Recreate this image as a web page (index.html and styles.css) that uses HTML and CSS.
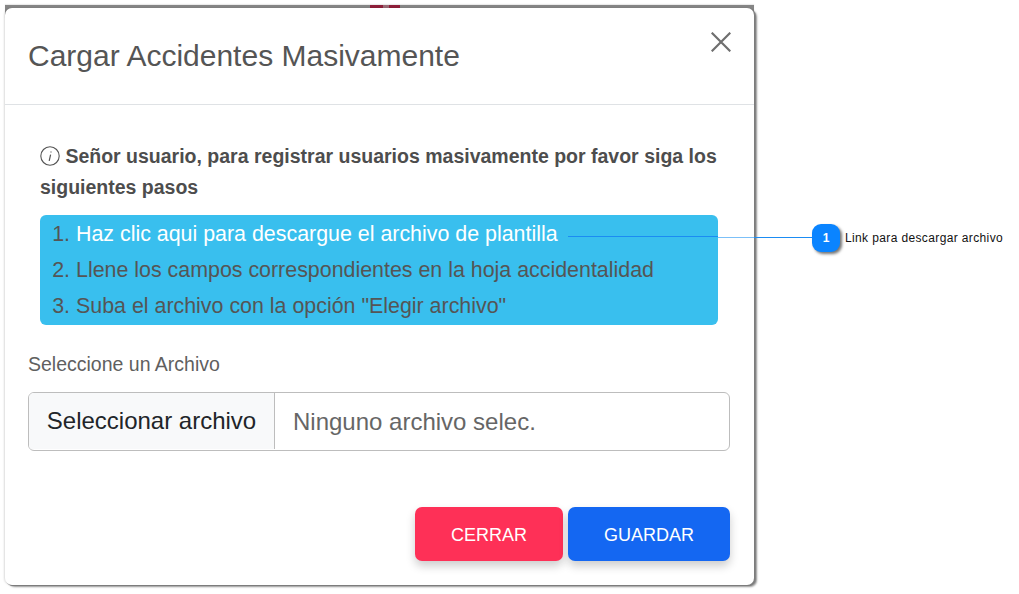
FILE: index.html
```html
<!DOCTYPE html>
<html lang="es">
<head>
<meta charset="utf-8">
<title>Cargar Accidentes Masivamente</title>
<link rel="stylesheet" href="styles.css">
</head>
<body>
<div class="stage">
  <div class="backdrop-edge"></div>
  <div class="modal">
    <header class="modal-header">
      <h1 class="modal-title">Cargar Accidentes Masivamente</h1>
      <svg class="close-icon" viewBox="0 0 20 20" width="20" height="20" aria-label="Cerrar"><path d="M.7.7 19.3 19.3M19.3.7.7 19.3"/></svg>
    </header>
    <div class="modal-body">
      <p class="notice">
        <svg class="info-icon" viewBox="0 0 20 20" width="20" height="20"><circle cx="10" cy="10" r="9.2"/><path class="info-i" d="M11 5.4v1.2M10.6 8.6 9.2 14.8"/></svg>
        <strong>Señor usuario, para registrar usuarios masivamente por favor siga los siguientes pasos</strong>
      </p>
      <ol class="steps">
        <li class="step-link">Haz clic aqui para descargue el archivo de plantilla</li>
        <li>Llene los campos correspondientes en la hoja accidentalidad</li>
        <li>Suba el archivo con la opción "Elegir archivo"</li>
      </ol>
      <label class="file-label">Seleccione un Archivo</label>
      <div class="file-input">
        <span class="file-button">Seleccionar archivo</span>
        <span class="file-name">Ninguno archivo selec.</span>
      </div>
    </div>
    <footer class="modal-footer">
      <button class="btn btn-close">CERRAR</button>
      <button class="btn btn-save">GUARDAR</button>
    </footer>
  </div>
  <div class="callout-line"></div>
  <div class="callout-line-far"></div>
  <div class="callout">
    <span class="badge">1</span>
    <span class="callout-text">Link para descargar archivo</span>
  </div>
</div>
</body>
</html>
```

FILE: styles.css
```css
* { box-sizing: border-box; }
html, body { margin: 0; padding: 0; background: #fff; }
body { font-family: "Liberation Sans", Arial, sans-serif; }
.stage { position: relative; width: 1019px; height: 594px; padding: 8px 0 0 5px; overflow: hidden; }
.backdrop-edge {
  position: absolute; left: 5px; top: 5px; width: 749px; height: 14px;
  background: linear-gradient(90deg, #858585 365px, #8e1f3a 365px, #8e1f3a 378px, #9a6a75 378px, #9a6a75 384px, #8e1f3a 384px, #8e1f3a 395px, #858585 395px);
  box-shadow: 0 -1px 1px rgba(0,0,0,.08);
}
.modal {
  position: relative;
  width: 749px; height: 577px; background: #fff; border-radius: 7px;
  display: flex; flex-direction: column;
  box-shadow: 1px 1px 0 #7c7c7c, 2px 1px 0 #858585, 3px 2px 2px rgba(0,0,0,.42), -1px 0 2px rgba(0,0,0,.14);
}
.modal-header {
  height: 97px; flex: none; border-bottom: 1px solid #dfe2e5;
  display: flex; justify-content: space-between; align-items: flex-start;
  padding: 31px 23px 0 23px;
}
.modal-title { margin: 0; font-size: 30px; line-height: 34px; font-weight: 400; color: #555; }
.close-icon { margin-top: -7px; display: block; }
.close-icon path { fill: none; stroke: #6f6f6f; stroke-width: 2.2; }
.modal-body { flex: 1; padding: 36px 24px 0 23px; }
.notice { margin: 0 0 12px 12px; width: 690px; font-size: 19.5px; line-height: 31px; color: #4d4d4d; }
.info-icon { vertical-align: -3px; }
.info-icon circle { fill: none; stroke: #555; stroke-width: 1.1; }
.info-i { fill: none; stroke: #555; stroke-width: 1.2; }
.steps {
  margin: 0 0 0 12px; width: 678px; height: 110px; padding: 2px 0 0 36px;
  background: #39bfee; border-radius: 6px; color: #555;
  font-size: 21.4px; line-height: 36px;
}
.step-link { color: #fff; line-height: 35px; }
.step-link::marker { color: #555; }
.file-label { display: block; margin: 27px 0 16px; font-size: 19.5px; line-height: 24px; color: #5f5f5f; }
.file-input {
  display: flex; align-items: stretch; height: 59px; width: 702px;
  border: 1px solid #bdbdbd; border-radius: 6px; font-size: 24px; overflow: hidden;
}
.file-button { width: 246px; background: #f8f9fa; border-right: 1px solid #bdbdbd; color: #212529; display: flex; align-items: center; justify-content: center; margin-bottom: 1px; }
.file-name { padding-left: 18px; color: #666; display: flex; align-items: center; }
.modal-footer { flex: none; display: flex; justify-content: flex-end; gap: 5px; padding: 0 24px 24px 0; }
.btn {
  height: 54px; border: 0; border-radius: 7px; color: #fff; font-family: inherit; font-size: 18px; padding: 3px 0 0;
  box-shadow: 0 5px 10px rgba(0,0,0,.2);
}
.btn-close { width: 148px; background: #fe3057; }
.btn-save { width: 162px; background: #1467f2; }
.callout-line { position: absolute; left: 568px; top: 236px; width: 150px; height: 1px; background: #1b8cf3; }
.callout-line-far { position: absolute; left: 718px; top: 237px; width: 96px; height: 1px; background: linear-gradient(90deg, #7cc0f8 36px, #1b8cf3 36px); }
.callout { position: absolute; left: 812px; top: 224px; display: flex; align-items: center; gap: 5px; }
.badge {
  width: 28px; height: 28px; border-radius: 9px; background: #0a84ff; color: #fff;
  font-size: 12px; font-weight: 700; display: flex; align-items: center; justify-content: center;
  box-shadow: 2px 2px 3px rgba(0,0,0,.55);
}
.callout-text { font-size: 12px; letter-spacing: .37px; color: #111; }
```
